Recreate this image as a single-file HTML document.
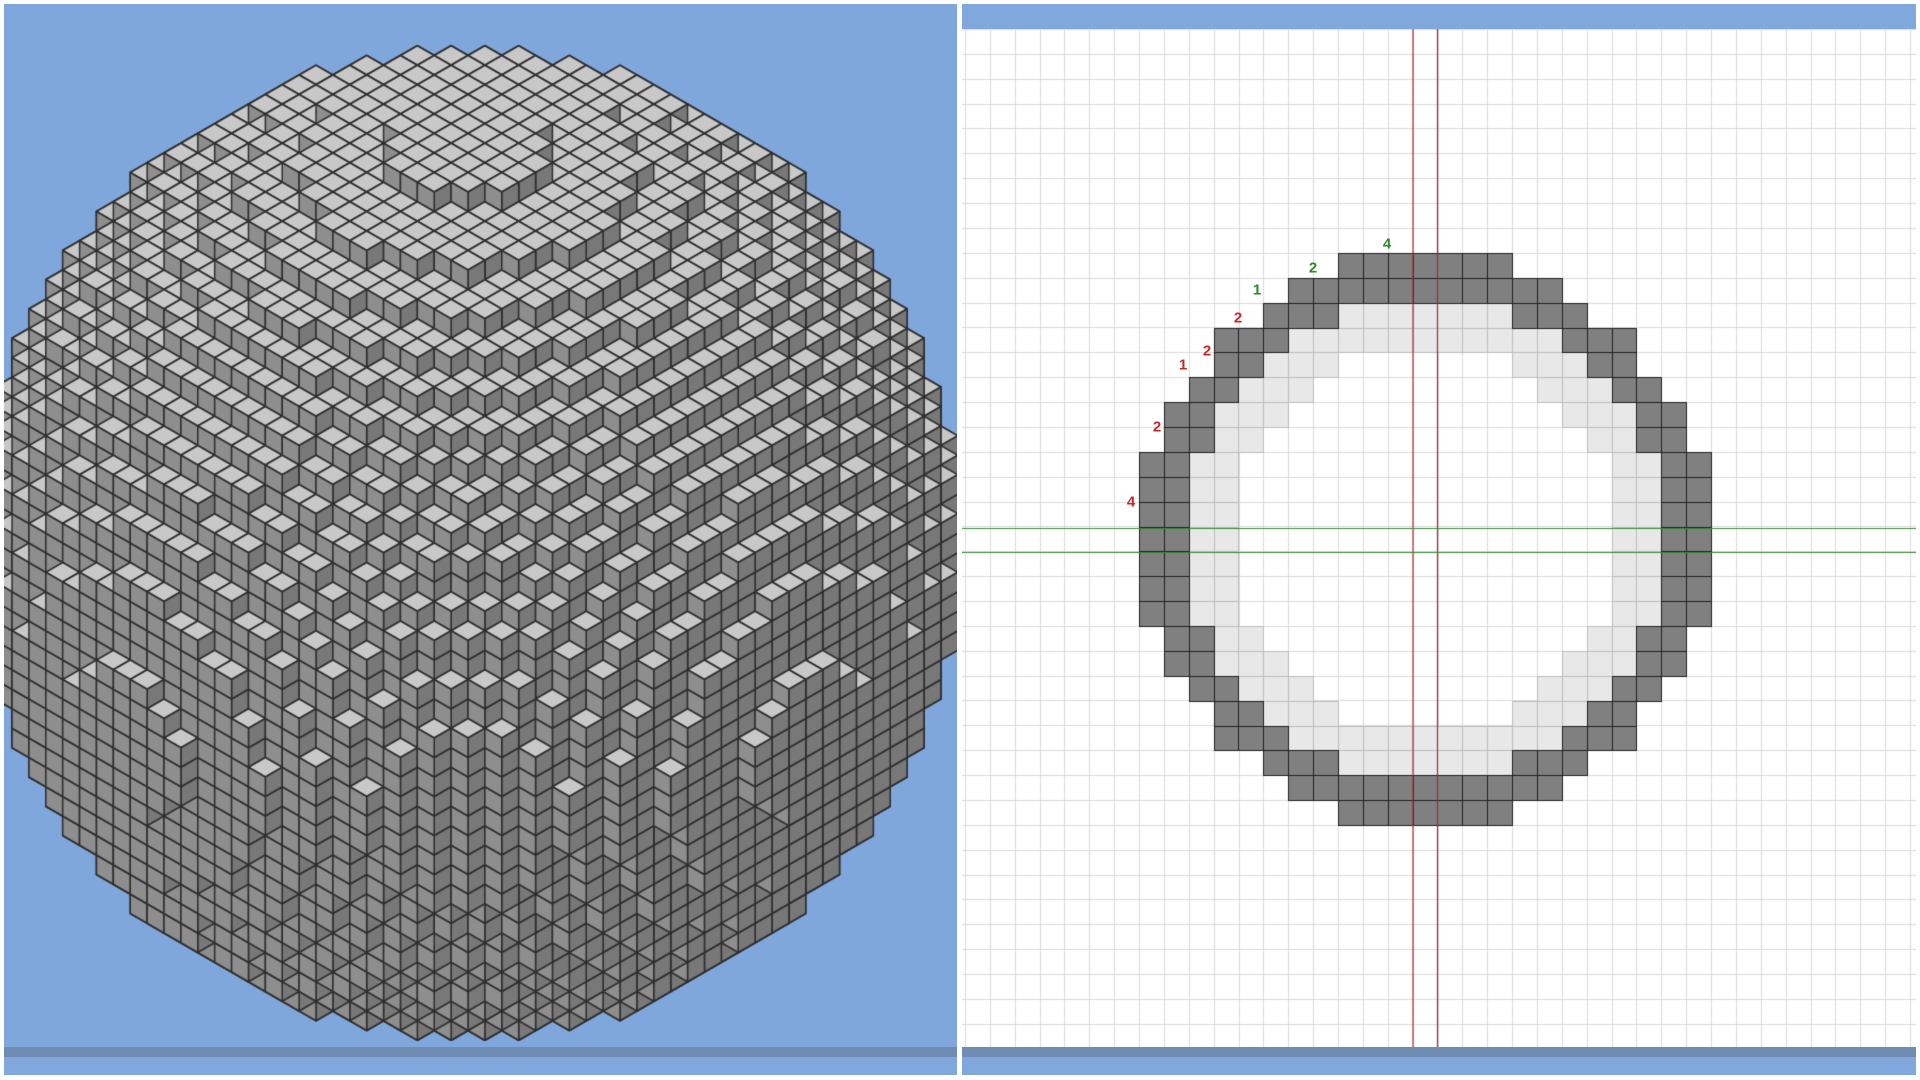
<!DOCTYPE html>
<html><head><meta charset="utf-8">
<style>
html,body{margin:0;padding:0;background:#fff;width:1920px;height:1080px;overflow:hidden;font-family:"Liberation Sans",sans-serif;}
#lp{position:absolute;left:4px;top:4px;width:953px;height:1043px;background:#80a7db;overflow:hidden;}
#lbar1{position:absolute;left:4px;top:1047px;width:953px;height:10px;background:#6f8cb3;}
#lbar2{position:absolute;left:4px;top:1057px;width:953px;height:18px;background:#81a8dc;}
#rtop{position:absolute;left:962px;top:4px;width:954px;height:25px;background:#81a8dc;}
#rp{position:absolute;left:962px;top:29px;width:954px;height:1018px;background:#fff;}
#rbar1{position:absolute;left:962px;top:1047px;width:954px;height:10px;background:#6f8cb3;}
#rbar2{position:absolute;left:962px;top:1057px;width:954px;height:18px;background:#81a8dc;}
.n{position:absolute;font-weight:bold;font-size:15px;line-height:15px;transform:translate(-50%,-50%);}
.r{color:#c3282b}.g{color:#2b8a2b}
</style></head><body>
<div id="lp"><canvas id="c1" width="953" height="1043"></canvas></div>
<div id="lbar1"></div><div id="lbar2"></div>
<div id="rtop"></div>
<div id="rp"><canvas id="c2" width="954" height="1018"></canvas></div>
<div id="rbar1"></div><div id="rbar2"></div>
<div class="n r" style="left:1131px;top:502px">4</div>
<div class="n r" style="left:1157px;top:427px">2</div>
<div class="n r" style="left:1183px;top:365px">1</div>
<div class="n r" style="left:1207px;top:351px">2</div>
<div class="n r" style="left:1238px;top:318px">2</div>
<div class="n g" style="left:1257px;top:290px">1</div>
<div class="n g" style="left:1313px;top:268px">2</div>
<div class="n g" style="left:1387px;top:244px">4</div>
<script>
(function(){
var c=document.getElementById('c1').getContext('2d');
var s=19.5,hw=s*0.8660254,cx=464,cy=539,R=20.3,R2=R*R;
function ins(i,j,k){return i*i+j*j+k*k<=R2;}
function P(X,Y,Z){return [cx+(X-Y)*hw, cy+(X+Y)*s/2-Z*s];}
var vs=[];
for(var i=-22;i<=22;i++)for(var j=-22;j<=22;j++)for(var k=-22;k<=22;k++){
 if(!ins(i,j,k))continue;
 var t=!ins(i,j,k+1),a=!ins(i+1,j,k),b=!ins(i,j+1,k);
 if(t||a||b)vs.push([i,j,k,t,a,b]);
}
vs.sort(function(p,q){return (p[0]+p[1]+p[2])-(q[0]+q[1]+q[2]);});
c.lineWidth=1.5;c.strokeStyle='#2e2e2e';c.lineJoin='round';
function poly(pts,f){c.beginPath();c.moveTo(pts[0][0],pts[0][1]);for(var n=1;n<pts.length;n++)c.lineTo(pts[n][0],pts[n][1]);c.closePath();c.fillStyle=f;c.fill();c.stroke();}
for(var m=0;m<vs.length;m++){
 var v=vs[m],i=v[0],j=v[1],k=v[2];
 poly([P(i-.5,j-.5,k+.5),P(i+.5,j-.5,k+.5),P(i+.5,j+.5,k+.5),P(i-.5,j+.5,k+.5)],'#c8c8c8');
 poly([P(i+.5,j-.5,k+.5),P(i+.5,j+.5,k+.5),P(i+.5,j+.5,k-.5),P(i+.5,j-.5,k-.5)],'#787878');
 poly([P(i-.5,j+.5,k+.5),P(i+.5,j+.5,k+.5),P(i+.5,j+.5,k-.5),P(i-.5,j+.5,k-.5)],'#8e8e8e');
}
var g=document.getElementById('c2').getContext('2d');
var cs=24.87,W=954,H=1018;
g.strokeStyle='#dadada';g.lineWidth=1;
for(var x=3;x<W;x+=cs){g.beginPath();g.moveTo(Math.round(x)+.5,0);g.lineTo(Math.round(x)+.5,H);g.stroke();}
for(var y=0;y<H;y+=cs){g.beginPath();g.moveTo(0,Math.round(y)+.5);g.lineTo(W,Math.round(y)+.5);g.stroke();}
var rows=[[[8,11],null],[[6,11],null],[[5,7],[8,11]],[[3,5],[6,11]],[[3,4],[5,7]],[[2,3],[4,6]],[[1,2],[3,5]],[[1,2],[3,4]],[[0,1],[2,3]],[[0,1],[2,3]],[[0,1],[2,3]],[[0,1],[2,3]]];
var ox=177,oy=224,cells=[];
for(var r=0;r<12;r++){
 var d=rows[r][0],l=rows[r][1];
 for(var col=d[0];col<=d[1];col++)cells.push([r,col,1]);
 if(l)for(var col=l[0];col<=l[1];col++)cells.push([r,col,0]);
}
var done={};
function cell(r,col,t){var key=r+'_'+col;if(done[key])return;done[key]=1;
 var x0=Math.round(ox+col*cs)+.5,y0=Math.round(oy+r*cs)+.5,x1=Math.round(ox+(col+1)*cs)+.5,y1=Math.round(oy+(r+1)*cs)+.5;
 g.fillStyle=t?'#808080':'#e8e8e8';g.fillRect(x0,y0,x1-x0,y1-y0);
 g.strokeStyle=t?'#1e1e1e':'#bcbcbc';g.strokeRect(x0,y0,x1-x0,y1-y0);}
[0,1].forEach(function(tt){cells.forEach(function(e){if(e[2]!==tt)return;var r=e[0],col=e[1];
 cell(r,col,tt);cell(r,22-col,tt);cell(22-r,col,tt);cell(22-r,22-col,tt);});});
g.strokeStyle='#9e2b2b';g.lineWidth=1.2;
[451,475.5].forEach(function(x){g.beginPath();g.moveTo(x,0);g.lineTo(x,H);g.stroke();});
g.strokeStyle='#3a8c3a';
[499.5,523.5].forEach(function(y){g.beginPath();g.moveTo(0,y);g.lineTo(W,y);g.stroke();});
})();
</script>
</body></html>
